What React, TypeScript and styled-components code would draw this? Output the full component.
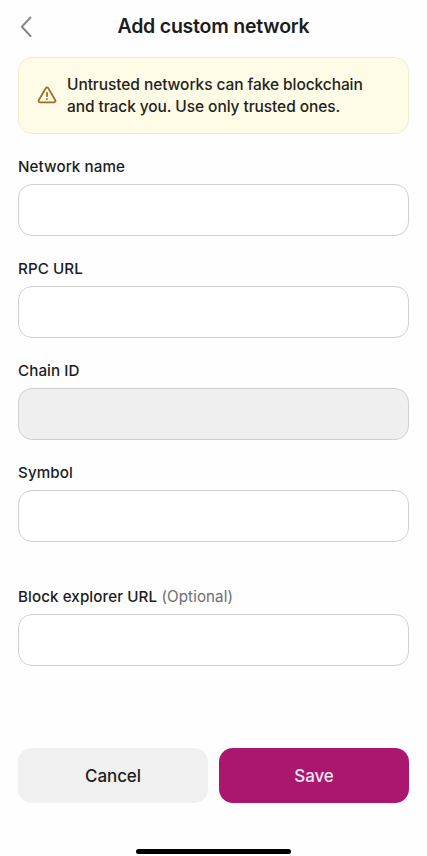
import React from 'react';
import styled, { createGlobalStyle } from 'styled-components';

const GlobalStyle = createGlobalStyle`
  *, *::before, *::after { box-sizing: border-box; }
  body {
    margin: 0;
    background: #fefefe;
    color: #1c1c1e;
    font-family: Inter, "Liberation Sans", sans-serif;
    -webkit-font-smoothing: antialiased;
  }
`;

const Screen = styled.main`
  display: flex;
  flex-direction: column;
  width: 427px;
  height: 856px;
  padding: 0 18px 2px;
  overflow: hidden;
`;

const Header = styled.header`
  display: grid;
  grid-template-columns: 24px 1fr 24px;
  align-items: center;
  height: 53px;
  flex: none;
`;

const BackButton = styled.button`
  display: flex;
  padding: 0;
  border: 0;
  background: none;
`;

const Title = styled.h1`
  margin: 0 0 2px;
  font-size: 19.5px;
  font-weight: 600;
  line-height: 24px;
  letter-spacing: -0.22px;
  text-align: center;
  white-space: nowrap;
`;

const Notice = styled.section`
  display: flex;
  flex: none;
  align-items: center;
  gap: 10px;
  height: 77px;
  margin-top: 4px;
  padding: 0 18px;
  border: 1px solid #f1edcb;
  border-radius: 14px;
  background: #fefbe7;
`;

const WarningIcon = styled.svg`
  flex: none;
  margin-bottom: 2px;
`;

const NoticeText = styled.p`
  margin: 0;
  color: #24231b;
  font-size: 15.5px;
  font-weight: 500;
  line-height: 22px;
  white-space: nowrap;
  letter-spacing: -0.08px;
`;

const Form = styled.form`
  display: flex;
  flex: 1;
  flex-direction: column;
  padding-top: 23px;
`;

const Field = styled.label<{ $gap?: number }>`
  display: flex;
  flex-direction: column;
  gap: 7px;
  margin-bottom: ${({ $gap = 23 }) => $gap}px;
`;

const Label = styled.span`
  font-size: 15.2px;
  font-weight: 500;
  line-height: 20px;
  white-space: nowrap;
  letter-spacing: 0.07px;
`;

const Optional = styled.span`
  color: #6d6d70;
  font-weight: 400;
`;

const Input = styled.input`
  width: 391px;
  height: 52px;
  padding: 0 16px;
  border: 1.5px solid #d0d0d0;
  border-radius: 14px;
  outline: 0;
  background: #fff;
  font: inherit;

  &:disabled { background: #efefef; }
`;

const Actions = styled.div`
  display: grid;
  grid-template-columns: 1fr 1fr;
  gap: 11px;
  margin-top: auto;
`;

const Button = styled.button<{ $primary?: boolean }>`
  height: 55px;
  padding: 0;
  border: 0;
  border-radius: 14px;
  background: ${({ $primary }) => ($primary ? '#ab176f' : '#f0f0f0')};
  color: ${({ $primary }) => ($primary ? '#fbe4f2' : '#1c1c1e')};
  font: 500 17px/22px Inter, "Liberation Sans", sans-serif;
  letter-spacing: -0.1px;
`;

const HomeIndicator = styled.div`
  flex: none;
  align-self: center;
  width: 155px;
  height: 5px;
  margin-top: 46px;
  border-radius: 3px;
  background: #000;
`;

const fields = [
  { label: 'Network name' },
  { label: 'RPC URL' },
  { label: 'Chain ID', disabled: true },
  { label: 'Symbol', gap: 45 },
  { label: 'Block explorer URL', optional: true, gap: 0 },
];

export default function App() {
  return (
    <>
      <GlobalStyle />
      <Screen>
        <Header>
          <BackButton aria-label="Back">
            <svg width="16" height="22" viewBox="0 0 16 22" fill="none">
              <path d="M12.5 1.5 3.8 10.7l8.7 9.3" stroke="#88888a" strokeWidth="2" strokeLinecap="round" strokeLinejoin="round" />
            </svg>
          </BackButton>
          <Title>Add custom network</Title>
        </Header>
        <Notice>
          <WarningIcon width="20" height="20" viewBox="0 0 20 20" fill="none" stroke="#9a7020" strokeWidth="1.8" strokeLinecap="round" strokeLinejoin="round">
            <path d="M8.8 3.1 1.7 15.2a1.4 1.4 0 0 0 1.2 2.1h14.2a1.4 1.4 0 0 0 1.2-2.1L11.2 3.1a1.4 1.4 0 0 0-2.4 0Z" />
            <path d="M10 7.8v3.4M10 14v.1" />
          </WarningIcon>
          <div>
            <NoticeText>Untrusted networks can fake blockchain</NoticeText>
            <NoticeText>and track you. Use only trusted ones.</NoticeText>
          </div>
        </Notice>
        <Form onSubmit={(event) => event.preventDefault()}>
          {fields.map(({ label, disabled, optional, gap }) => (
            <Field key={label} $gap={gap}>
              <Label>
                {label}
                {optional && <Optional> (Optional)</Optional>}
              </Label>
              <Input disabled={disabled} />
            </Field>
          ))}
          <Actions>
            <Button type="button">Cancel</Button>
            <Button type="submit" $primary>Save</Button>
          </Actions>
        </Form>
        <HomeIndicator />
      </Screen>
    </>
  );
}
